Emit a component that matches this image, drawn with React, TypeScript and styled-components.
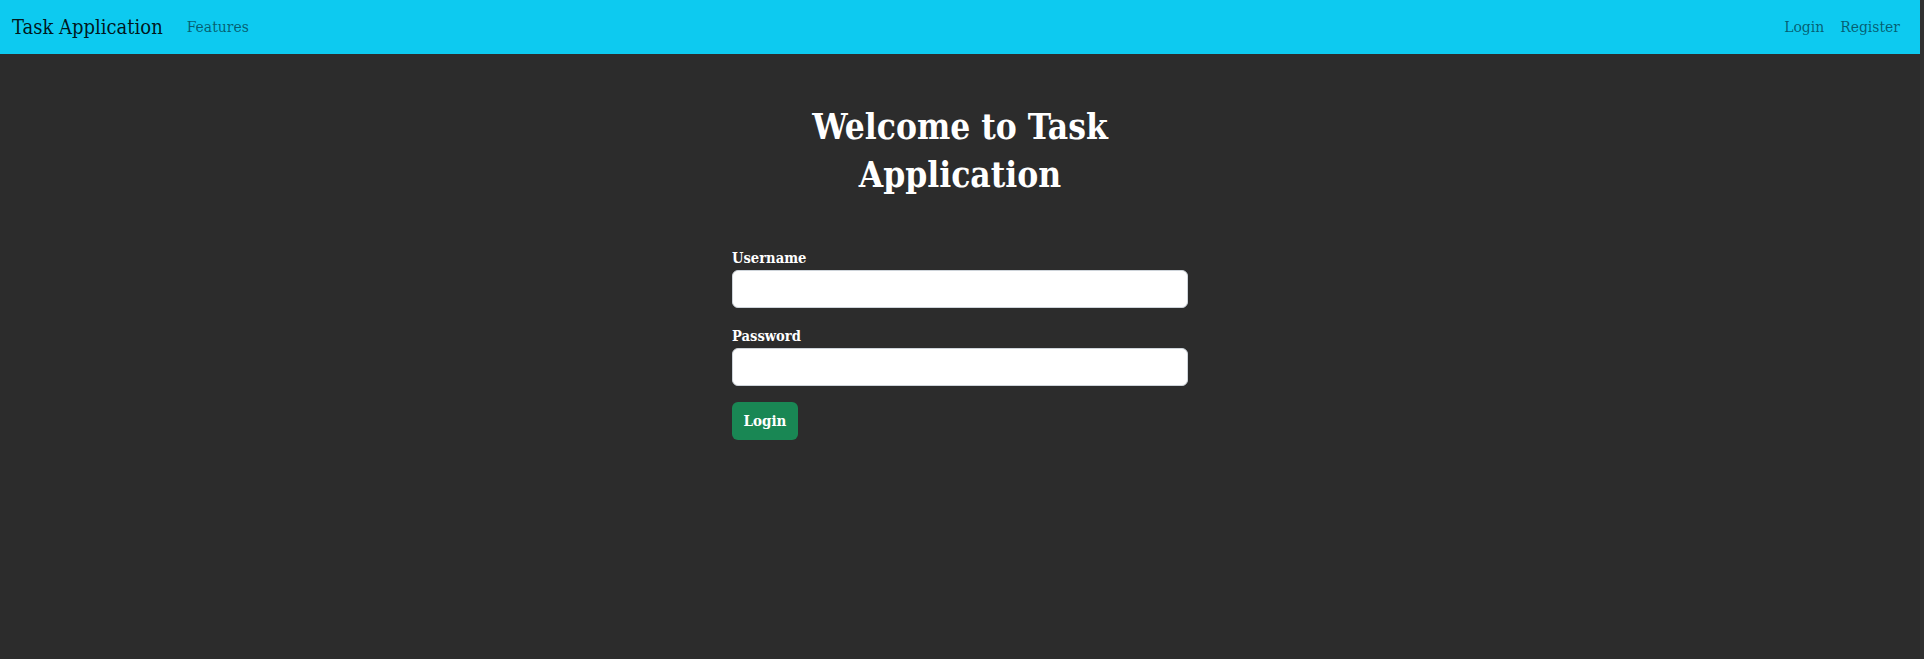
import React from "react";
import styled, { createGlobalStyle } from "styled-components";

const Global = createGlobalStyle`
  html, body { margin: 0; padding: 0; background: #313131; }
  body {
    font-family: "DejaVu Serif", "Liberation Serif", serif;
    font-stretch: condensed;
  }
  * { box-sizing: border-box; }
`;

const Page = styled.div`
  width: 1920px;
  min-height: 659px;
  background: #2c2c2c;
  display: flex;
  flex-direction: column;
`;

const NavBar = styled.nav`
  height: 54px;
  background: #0dcaf0;
  display: flex;
  align-items: center;
  padding: 0 12px;
`;

const Brand = styled.a`
  font-size: 20px;
  color: rgba(0, 0, 0, 0.9);
  text-decoration: none;
  margin-right: 16px;
`;

const NavList = styled.div<{ $end?: boolean }>`
  display: flex;
  align-items: center;
  margin-left: ${(p) => (p.$end ? "auto" : "0")};
`;

const NavLink = styled.a`
  font-size: 15.5px;
  color: rgba(0, 0, 0, 0.55);
  padding: 8px;
  text-decoration: none;
`;

const Main = styled.main`
  width: 456px;
  margin: 49px auto 0;
  display: flex;
  flex-direction: column;
`;

const Title = styled.h1`
  margin: 0 0 47px;
  font-size: 35px;
  line-height: 48px;
  font-weight: 700;
  color: #ffffff;
  text-align: center;
`;

const Form = styled.form`
  display: flex;
  flex-direction: column;
`;

const Field = styled.div`
  display: flex;
  flex-direction: column;
  margin-bottom: 16px;
`;

const Label = styled.label`
  font-size: 14.6px;
  line-height: 24px;
  font-weight: 700;
  color: #ffffff;
`;

const Input = styled.input`
  height: 38px;
  width: 100%;
  border: 1px solid #ced4da;
  border-radius: 6px;
  background: #ffffff;
  padding: 6px 12px;
  font-family: inherit;
  font-size: 16px;
`;

const Button = styled.button`
  align-self: flex-start;
  height: 38px;
  width: 66px;
  border: none;
  border-radius: 6px;
  background: #198754;
  color: #ffffff;
  font-family: inherit;
  font-stretch: condensed;
  font-size: 15px;
  font-weight: 700;
  padding: 0;
`;

export default function App() {
  return (
    <>
      <Global />
      <Page>
        <NavBar>
          <Brand href="#">Task Application</Brand>
          <NavList>
            <NavLink href="#">Features</NavLink>
          </NavList>
          <NavList $end>
            <NavLink href="#">Login</NavLink>
            <NavLink href="#">Register</NavLink>
          </NavList>
        </NavBar>
        <Main>
          <Title>
            Welcome to Task
            <br />
            Application
          </Title>
          <Form onSubmit={(e) => e.preventDefault()}>
            <Field>
              <Label htmlFor="username">Username</Label>
              <Input id="username" type="text" />
            </Field>
            <Field>
              <Label htmlFor="password">Password</Label>
              <Input id="password" type="password" />
            </Field>
            <Button type="submit">Login</Button>
          </Form>
        </Main>
      </Page>
    </>
  );
}
